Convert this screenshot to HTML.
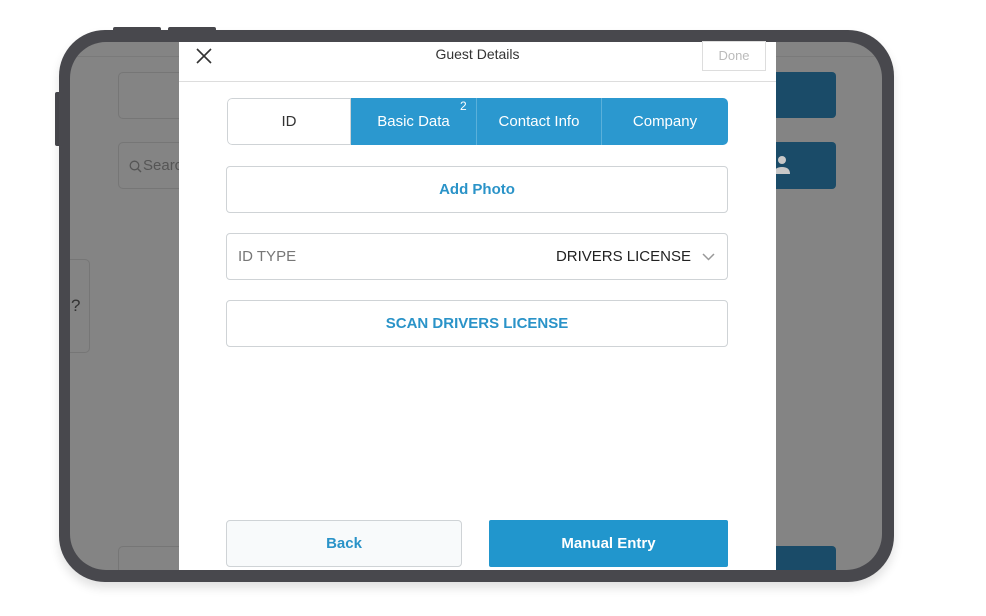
<!DOCTYPE html>
<html><head><style>
*{margin:0;padding:0;box-sizing:border-box}
body{width:986px;height:616px;background:#fff;position:relative;overflow:hidden;font-family:"Liberation Sans",sans-serif}
.abs{position:absolute}
.frame{left:59px;top:30px;width:835px;height:552px;background:#48484d;border-radius:46px;box-shadow:0 6px 10px rgba(0,0,0,.12)}
.btnside{background:#48484d;border-radius:2px}
.screen{left:70px;top:42px;width:812px;height:528px;background:#848484;border-radius:36px;overflow:hidden}
.gbox{border:1px solid #767676;border-radius:5px}
.dblue{background:#1a4b68;border-radius:4px}
.modal{left:179px;top:42px;width:597px;height:528px;background:#fff}
.box{border:1px solid #cfd3d6;border-radius:4px;background:#fff}
.blue{color:#2a93c8}
</style></head><body>
<div class="abs btnside" style="left:113px;top:27px;width:48px;height:6px"></div>
<div class="abs btnside" style="left:168px;top:27px;width:48px;height:6px"></div>
<div class="abs btnside" style="left:55px;top:92px;width:6px;height:54px"></div>
<div class="abs frame"></div>
<div class="abs screen">
  <div class="abs" style="left:0;top:14px;width:812px;height:1px;background:#7a7a7a"></div>
  <div class="abs gbox" style="left:48px;top:30px;width:80px;height:47px"></div>
  <div class="abs gbox" style="left:48px;top:100px;width:80px;height:47px;color:#555;font-size:15px;padding:14px 0 0 24px">Search
    <svg class="abs" style="left:10px;top:17px" width="13" height="13" viewBox="0 0 13 13"><circle cx="5.5" cy="5.5" r="4.3" stroke="#555" stroke-width="1.3" fill="none"/><path d="M8.6 8.6L12 12" stroke="#555" stroke-width="1.4"/></svg></div>
  <div class="abs gbox" style="left:-6px;top:217px;width:26px;height:94px;color:#333;font-size:17px;padding:36px 0 0 6px">?</div>
  <div class="abs dblue" style="left:690px;top:30px;width:76px;height:46px"></div>
  <div class="abs dblue" style="left:690px;top:100px;width:76px;height:47px">
    <svg class="abs" style="left:12px;top:12px" width="20" height="22" viewBox="0 0 20 22"><circle cx="10" cy="6" r="4" fill="#c8c8c8"/><path d="M2 20q0-7 8-7t8 7z" fill="#c8c8c8"/></svg>
  </div>
  <div class="abs gbox" style="left:48px;top:504px;width:80px;height:40px"></div>
  <div class="abs dblue" style="left:690px;top:504px;width:76px;height:40px"></div>
</div>
<div class="abs modal">
  <svg class="abs" style="left:17px;top:6px" width="16" height="16" viewBox="0 0 16 16"><path d="M1 1L15 15M15 1L1 15" stroke="#333" stroke-width="1.6"/></svg>
  <div class="abs" style="left:0;top:4px;width:597px;text-align:center;font-size:14px;color:#333">Guest Details</div>
  <div class="abs" style="left:523px;top:-1px;width:64px;height:30px;border:1px solid #ddd;color:#bbb;font-size:13px;text-align:center;line-height:28px">Done</div>
  <div class="abs" style="left:0;top:39px;width:597px;height:1px;background:#ddd"></div>
  <div class="abs" style="left:48px;top:56px;width:501px;height:47px;border-radius:5px;overflow:hidden;display:flex;font-size:15px">
    <div style="width:124px;border:1px solid #cfd3d6;border-radius:5px 0 0 5px;text-align:center;line-height:45px;color:#333">ID</div>
    <div style="width:126px;background:#2b98cf;color:#fff;text-align:center;line-height:47px;border-right:1px solid #5ab0da;position:relative">Basic Data<span style="position:absolute;left:109px;top:-15px;font-size:12px">2</span></div>
    <div style="width:125px;background:#2b98cf;color:#fff;text-align:center;line-height:47px;border-right:1px solid #5ab0da">Contact Info</div>
    <div style="width:126px;background:#2b98cf;color:#fff;text-align:center;line-height:47px">Company</div>
  </div>
  <div class="abs box blue" style="left:47px;top:124px;width:502px;height:47px;text-align:center;line-height:45px;font-size:15px;font-weight:bold">Add Photo</div>
  <div class="abs box" style="left:47px;top:191px;width:502px;height:47px;font-size:15px;line-height:45px">
    <span class="abs" style="left:11px;color:#777">ID TYPE</span>
    <span class="abs" style="right:36px;color:#222">DRIVERS LICENSE</span>
    <svg class="abs" style="right:12px;top:19px" width="13" height="8" viewBox="0 0 13 8"><path d="M1 1l5.5 5.5L12 1" stroke="#999" stroke-width="1.5" fill="none"/></svg>
  </div>
  <div class="abs box blue" style="left:47px;top:258px;width:502px;height:47px;text-align:center;line-height:45px;font-size:15px;font-weight:bold">SCAN DRIVERS LICENSE</div>
  <div class="abs box blue" style="left:47px;top:478px;width:236px;height:47px;text-align:center;line-height:45px;font-size:15px;font-weight:bold;background:#f8fafb">Back</div>
  <div class="abs" style="left:310px;top:478px;width:239px;height:47px;text-align:center;line-height:47px;font-size:15px;font-weight:bold;background:#2196cd;color:#fff;border-radius:2px">Manual Entry</div>
</div>
</body></html>
